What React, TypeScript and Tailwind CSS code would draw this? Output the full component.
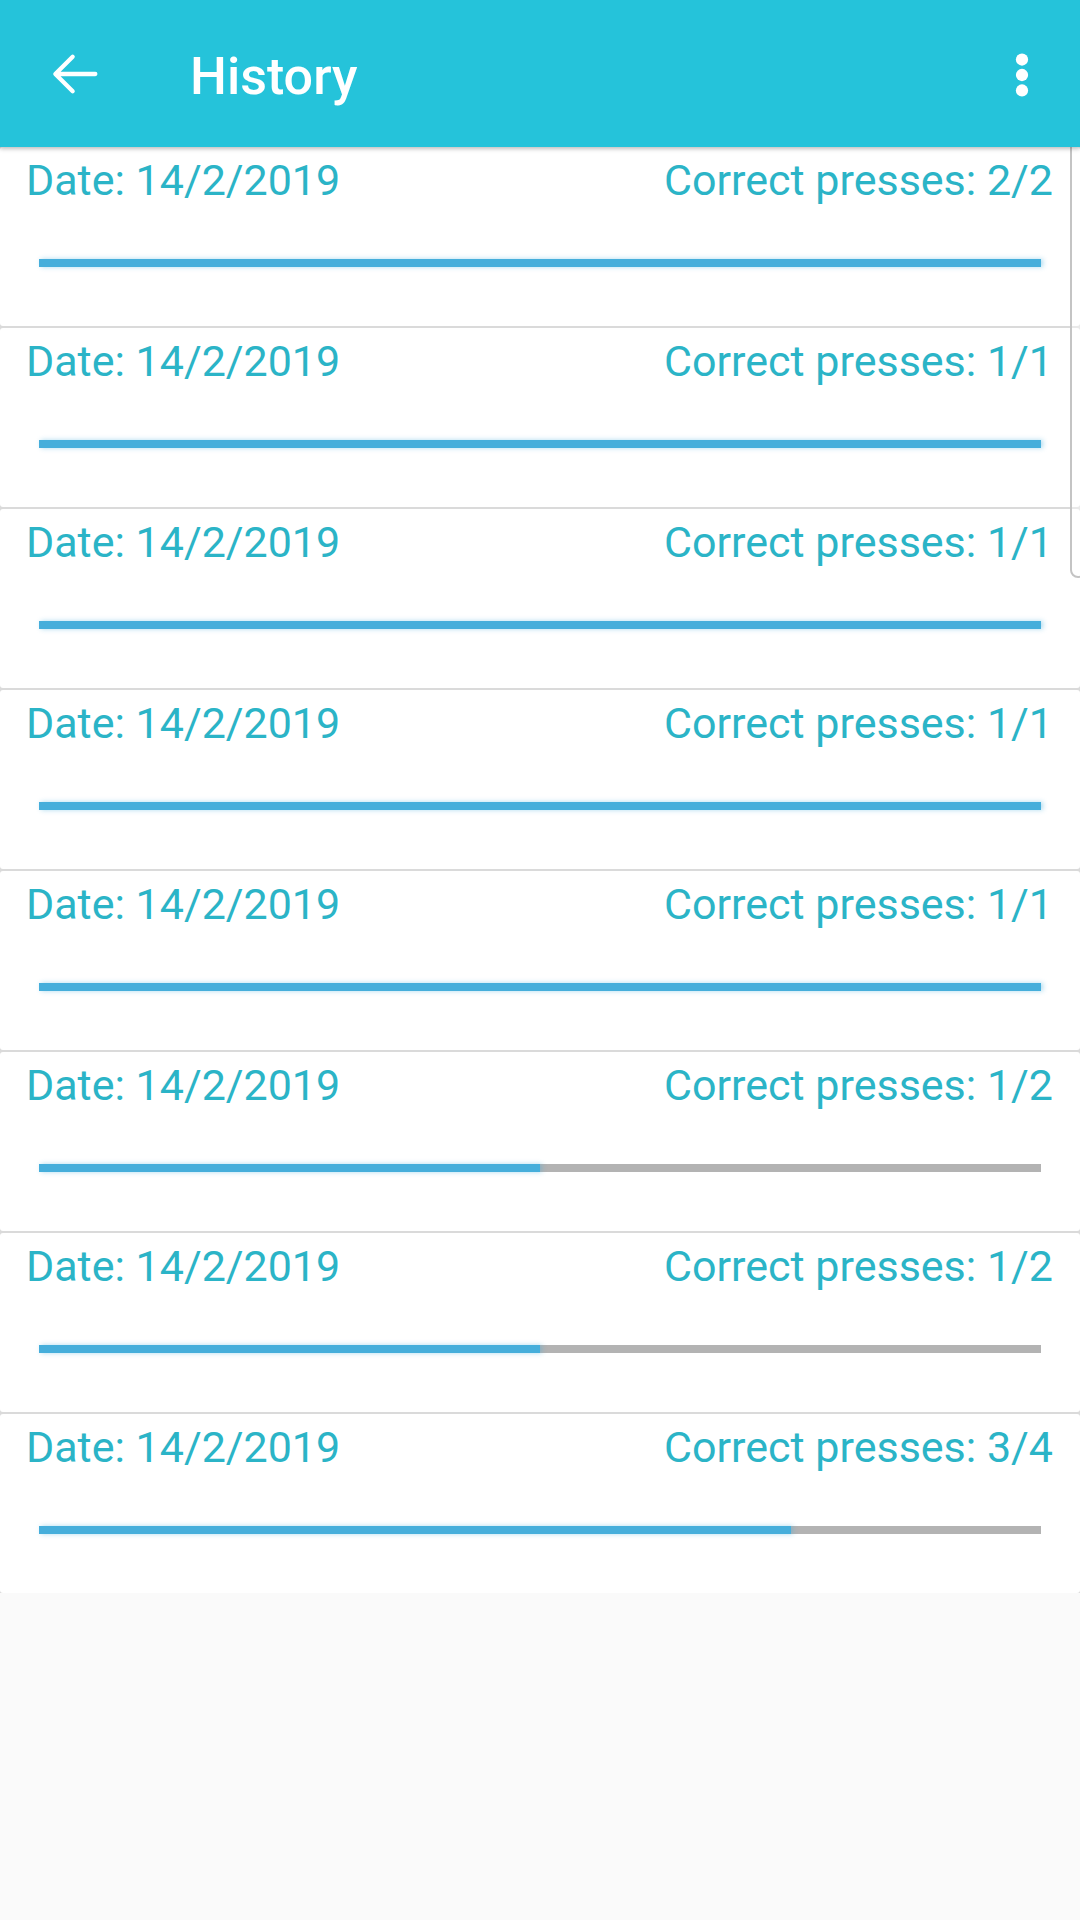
const rows = [
  { correct: 2, total: 2 },
  { correct: 1, total: 1 },
  { correct: 1, total: 1 },
  { correct: 1, total: 1 },
  { correct: 1, total: 1 },
  { correct: 1, total: 2 },
  { correct: 1, total: 2 },
  { correct: 3, total: 4 },
];

function ArrowBack() {
  return (
    <svg width="64" height="64" viewBox="0 0 24 24" fill="none">
      <path
        d="M20 12H5.5M11.5 5.5L5 12l6.5 6.5"
        stroke="white"
        strokeWidth="1.6"
        strokeLinecap="round"
        strokeLinejoin="round"
      />
    </svg>
  );
}

function MoreVert() {
  return (
    <svg width="64" height="64" viewBox="0 0 24 24" fill="white">
      <circle cx="12" cy="6.2" r="2.3" />
      <circle cx="12" cy="12" r="2.3" />
      <circle cx="12" cy="17.8" r="2.3" />
    </svg>
  );
}

function HistoryCard({ correct, total }: { correct: number; total: number }) {
  const pct = (correct / total) * 100;
  return (
    <div className="h-[179px] bg-white rounded-[3px] pl-[26px] pr-[27px] pt-[9px]">
      <div className="flex justify-between text-[43px] leading-[48px] text-[#2bb4c7]">
        <span>Date: 14/2/2019</span>
        <span>
          Correct presses: {correct}/{total}
        </span>
      </div>
      <div className="mt-[55px] ml-[13px] mr-[12px] h-[8px] bg-[#b3b3b3] relative">
        <div
          className="absolute left-0 top-0 h-full bg-[#46aedb] shadow-[2px_0_5px_rgba(70,174,219,0.45)]"
          style={{ width: `${pct}%` }}
        />
      </div>
    </div>
  );
}

export default function App() {
  return (
    <div
      className="relative w-[1080px] h-[1920px] bg-[#fafafa] overflow-hidden"
      style={{ fontFamily: 'Roboto, "Liberation Sans", sans-serif' }}
    >
      <header className="relative z-10 h-[147px] bg-[#25c3da] flex items-center shadow-[0_2px_4px_rgba(0,0,0,0.25)]">
        <div className="w-[148px] pl-[42px] flex items-center">
          <ArrowBack />
        </div>
        <h1 className="flex-1 pl-[42px] pt-[6px] text-[52px] leading-[60px] font-medium text-white">
          History
        </h1>
        <div className="pr-[26px] pt-[2px]">
          <MoreVert />
        </div>
      </header>

      <div className="flex flex-col gap-[2px] bg-[#dadada]">
        {rows.map((r, i) => (
          <HistoryCard key={i} correct={r.correct} total={r.total} />
        ))}
      </div>

      {/* scroll indicator */}
      <div className="absolute right-[-6px] top-[130px] w-[16px] h-[448px] rounded-[10px] border-[2px] border-[#c4c4c4] bg-white/40" />
    </div>
  );
}
